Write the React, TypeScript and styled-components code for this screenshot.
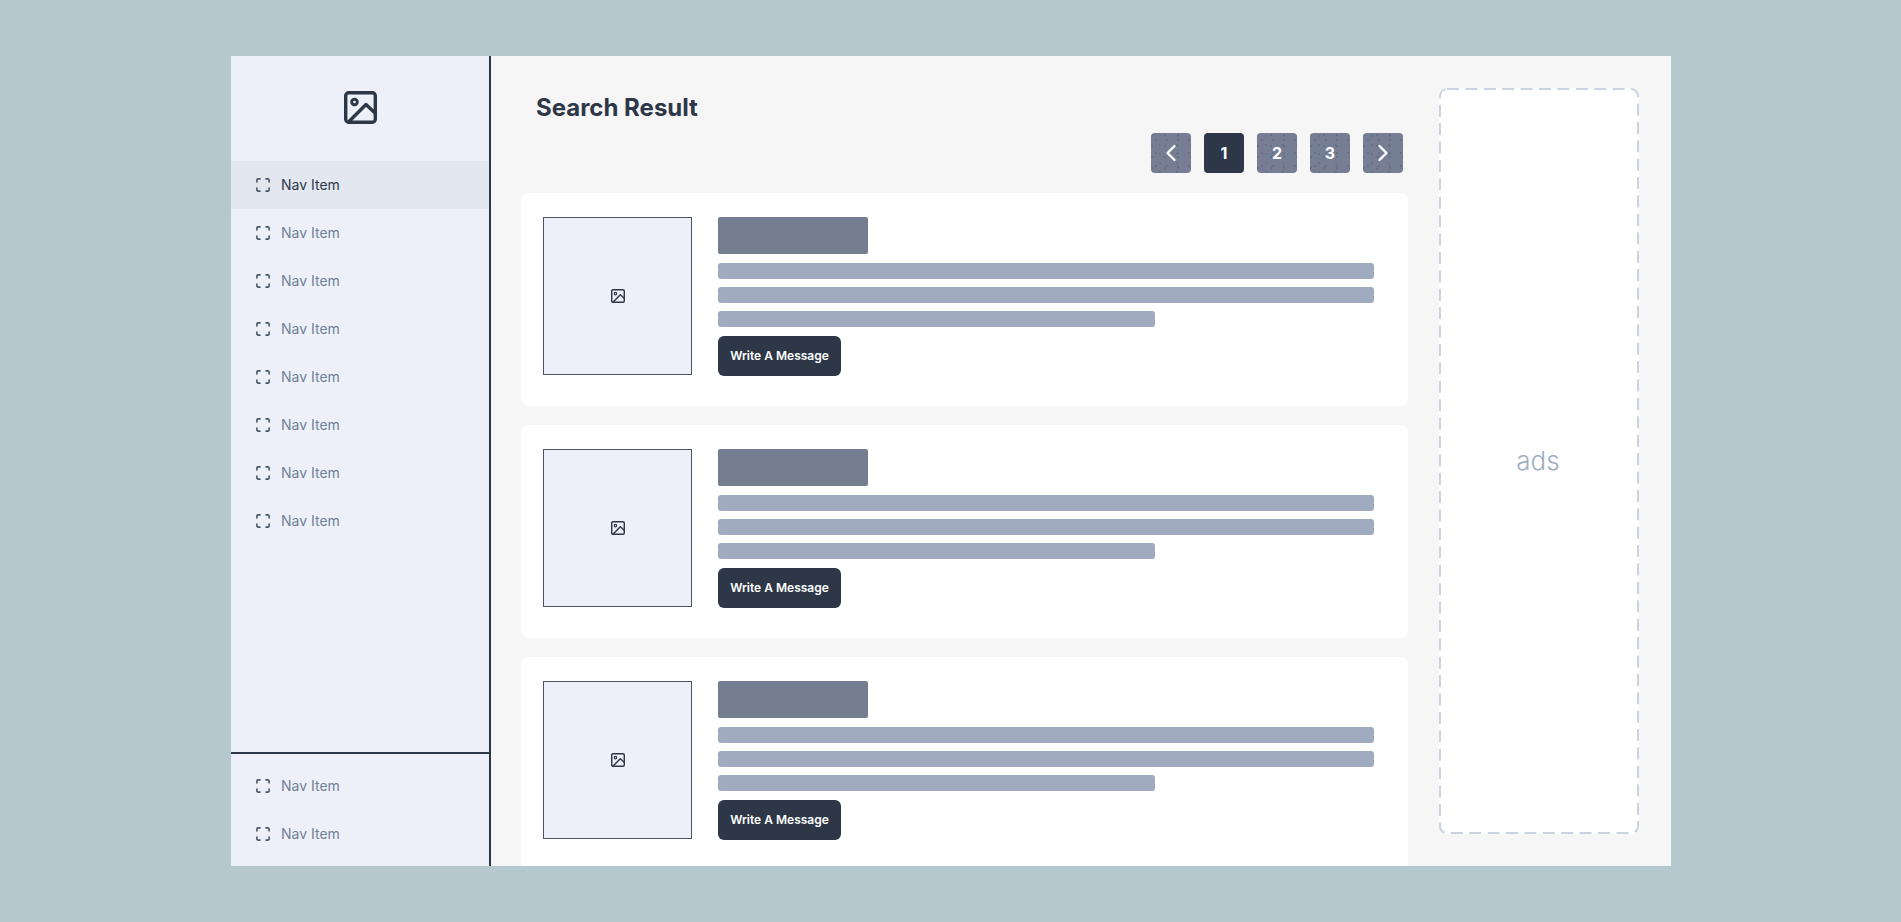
import * as React from 'react';
import styled, { createGlobalStyle } from 'styled-components';
import { ChevronLeft, ChevronRight } from 'lucide-react';

const GlobalStyle = createGlobalStyle`
  html, body {
    margin: 0;
    padding: 0;
    height: 100%;
    overflow: hidden;
  }

  body {
    background: #b4c8ce;
    font-family: Inter, "Noto Sans", sans-serif;
  }

  * {
    box-sizing: border-box;
  }
`;

const ImageIcon = ({ size, weight }: { size: number; weight: number }) => (
  <svg width={size} height={size} viewBox="0 0 33 33" fill="none" stroke="#2d3748" strokeWidth={weight} strokeLinecap="round" strokeLinejoin="round">
    <rect x="1.7" y="1.7" width="29.6" height="29.6" rx="3" />
    <circle cx="10.5" cy="11" r="2.8" strokeWidth={weight * 0.85} />
    <path d="M4.5 31 L22 13.5 L31 22" />
  </svg>
);

const FocusIcon = () => (
  <svg width="14" height="14" viewBox="0 0 14 14" fill="none" stroke="#4a5568" strokeWidth="1.6" strokeLinecap="round" strokeLinejoin="round">
    <path d="M.9 4V2.1A1.2 1.2 0 0 1 2.1.9H4" />
    <path d="M10 .9h1.9a1.2 1.2 0 0 1 1.2 1.2V4" />
    <path d="M13.1 10v1.9a1.2 1.2 0 0 1-1.2 1.2H10" />
    <path d="M4 13.1H2.1a1.2 1.2 0 0 1-1.2-1.2V10" />
  </svg>
);

const Frame = styled.div`
  position: absolute;
  top: 56px;
  left: 231px;
  width: 1440px;
  height: 810px;
  display: flex;
  overflow: hidden;
  background: #f6f6f6;
`;

const Sidebar = styled.nav`
  width: 260px;
  flex: none;
  display: flex;
  flex-direction: column;
  background: #edf0f8;
  border-right: 2px solid #2d3748;
`;

const Logo = styled.div`
  height: 105px;
  flex: none;
  display: flex;
  align-items: center;
  justify-content: center;
  padding: 0 0 2px 1px;
`;

const NavList = styled.div`
  flex: 1;
`;

const NavFooter = styled.div`
  flex: none;
  padding: 8px 0;
  border-top: 2px solid #2d3748;
`;

const NavRow = styled.div<{ $active?: boolean }>`
  height: 48px;
  display: flex;
  align-items: center;
  gap: 11px;
  padding-left: 25px;
  font-size: 14px;
  color: ${(p) => (p.$active ? '#2d3748' : '#718096')};
  background: ${(p) => (p.$active ? '#e2e7f0' : 'transparent')};
`;

const NavLabel = styled.span`
  line-height: 20px;
  padding-bottom: 1px;
`;

const Main = styled.main`
  flex: 1;
  min-width: 0;
  display: flex;
  overflow: hidden;
`;

const Results = styled.section`
  width: 917px;
  flex: none;
  padding: 32px 0 0 30px;
`;

const Title = styled.h1`
  margin: 0 0 0 15px;
  height: 40px;
  font-size: 24px;
  line-height: 40px;
  font-weight: 700;
  color: #2d3748;
`;

const Pager = styled.div`
  display: flex;
  justify-content: flex-end;
  gap: 13px;
  height: 40px;
  margin: 5px 5px 20px 0;
`;

const PageButton = styled.div<{ $active?: boolean }>`
  width: 40px;
  height: 40px;
  display: flex;
  align-items: center;
  justify-content: center;
  border-radius: 4px;
  font-size: 16px;
  font-weight: 700;
  color: #fff;
  background-color: ${(p) => (p.$active ? '#2d3748' : '#757e93')};
  background-image: ${(p) =>
    p.$active
      ? 'none'
      : `radial-gradient(circle at 1px 2px, rgba(45,55,72,.4) .5px, transparent .9px),
         radial-gradient(circle at 5px 7px, rgba(45,55,72,.35) .5px, transparent .9px),
         radial-gradient(circle at 9px 3px, rgba(45,55,72,.3) .5px, transparent .9px)`};
  background-size: 13px 11px, 11px 13px, 17px 9px;
`;

const CardList = styled.div`
  display: flex;
  flex-direction: column;
  gap: 19px;
`;

const Card = styled.article`
  height: 213px;
  flex: none;
  display: flex;
  gap: 26px;
  padding: 24px 34px 0 22px;
  background: #fff;
  border-radius: 8px;
`;

const Thumb = styled.div`
  width: 149px;
  height: 158px;
  flex: none;
  display: flex;
  align-items: center;
  justify-content: center;
  background: #edf0f8;
  border: 1px solid #4a5568;
`;

const CardBody = styled.div`
  flex: 1;
  min-width: 0;
  display: flex;
  flex-direction: column;
  align-items: flex-start;
`;

const Heading = styled.div`
  width: 150px;
  height: 37px;
  margin-bottom: 9px;
  background: #757d90;
  border-radius: 2px;
`;

const TextLine = styled.div<{ $short?: boolean }>`
  width: ${(p) => (p.$short ? '437px' : '100%')};
  height: 16px;
  margin-bottom: 8px;
  background: #a1abbf;
  border-radius: 3px;
`;

const MessageButton = styled.div`
  height: 40px;
  width: 123px;
  margin-top: 1px;
  padding-bottom: 2px;
  display: flex;
  align-items: center;
  justify-content: center;
  font-size: 12px;
  font-weight: 600;
  color: #fff;
  background: #2d3748;
  border-radius: 6px;
`;

const Aside = styled.aside`
  flex: 1;
  padding: 32px 32px 32px 31px;
`;

const Ads = styled.div`
  position: relative;
  height: 100%;
  display: flex;
  align-items: center;
  justify-content: center;
  padding: 0 2px 2px 0;
  font-size: 26px;
  font-weight: 300;
  color: #a0aec0;
  background: #fff;
  border-radius: 8px;
`;

const DashedEdge = styled.svg`
  position: absolute;
  inset: 0;
  width: 100%;
  height: 100%;
  fill: none;
  stroke: #cbd2e0;
  stroke-width: 2;
  stroke-dasharray: 12 6.4;
`;

const navItems = Array.from({ length: 8 }, (_, i) => i);

export default function App() {
  return (
    <>
      <GlobalStyle />
      <Frame>
        <Sidebar>
          <Logo>
            <ImageIcon size={33} weight={3.4} />
          </Logo>
          <NavList>
            {navItems.map((i) => (
              <NavRow key={i} $active={i === 0}>
                <FocusIcon />
                <NavLabel>Nav Item</NavLabel>
              </NavRow>
            ))}
          </NavList>
          <NavFooter>
            <NavRow>
              <FocusIcon />
              <NavLabel>Nav Item</NavLabel>
            </NavRow>
            <NavRow>
              <FocusIcon />
              <NavLabel>Nav Item</NavLabel>
            </NavRow>
          </NavFooter>
        </Sidebar>
        <Main>
          <Results>
            <Title>Search Result</Title>
            <Pager>
              <PageButton>
                <ChevronLeft size={28} strokeWidth={2} />
              </PageButton>
              <PageButton $active>1</PageButton>
              <PageButton>2</PageButton>
              <PageButton>3</PageButton>
              <PageButton>
                <ChevronRight size={28} strokeWidth={2} />
              </PageButton>
            </Pager>
            <CardList>
              {[0, 1, 2].map((i) => (
                <Card key={i}>
                  <Thumb>
                    <ImageIcon size={14} weight={3.4} />
                  </Thumb>
                  <CardBody>
                    <Heading />
                    <TextLine />
                    <TextLine />
                    <TextLine $short />
                    <MessageButton>Write A Message</MessageButton>
                  </CardBody>
                </Card>
              ))}
            </CardList>
          </Results>
          <Aside>
            <Ads>
              <DashedEdge>
                <rect x="1" y="1" width="198" height="744" rx="7" />
              </DashedEdge>
              ads
            </Ads>
          </Aside>
        </Main>
      </Frame>
    </>
  );
}
